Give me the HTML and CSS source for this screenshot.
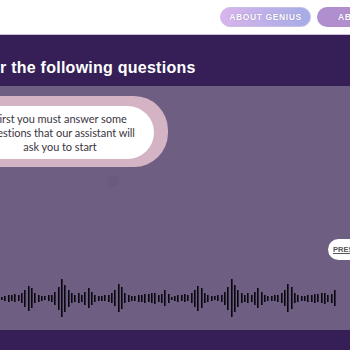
FILE: index.html
```html
<!DOCTYPE html>
<html lang="en">
<head>
<meta charset="UTF-8" />
<meta name="viewport" content="width=device-width, initial-scale=1" />
<title>Genius – Questions</title>
<link rel="stylesheet" href="styles.css">
</head>
<body>

<header class="topbar">
  <nav class="nav">
    <a class="nav-btn genius" href="#">About Genius</a>
    <a class="nav-btn other" href="#">About us</a>
  </nav>
</header>

<div class="title-band">
  <h1>r the following questions</h1>
</div>

<main class="stage">
  <div class="bubble">
    <p class="bubble-text">First you must answer some<br>questions that our assistant will<br>ask you to start</p>
  </div>
  <div class="dot"></div>

  <div class="press-row">
    <button class="press-btn">PRESS</button>
  </div>

  <svg class="wave" id="wave" width="350" height="42" viewBox="0 0 350 42"></svg>
</main>

<footer class="bottom-band"></footer>

<script src="script.js"></script>
</body>
</html>
```

FILE: styles.css
```css
body {
  margin: 0;
  width: 350px;
  overflow: hidden;
  background: #fff;
  font-family: 'Liberation Sans', Arial, sans-serif;
}

/* top white bar */
.topbar {
  height: 34px;
  background: #fff;
  border-bottom: 1px solid #cdbfd9;
  overflow: hidden;
}
.nav {
  display: flex;
  gap: 6px;
  padding: 7px 0 0 220px;
  white-space: nowrap;
}
.nav-btn {
  display: flex;
  align-items: center;
  justify-content: center;
  height: 20px;
  width: 91px;
  flex-shrink: 0;
  box-sizing: border-box;
  border-radius: 10px;
  color: #fff;
  font-size: 8.5px;
  font-weight: bold;
  letter-spacing: 0.6px;
  text-transform: uppercase;
  text-decoration: none;
  text-shadow: 0 0 1px rgba(90, 60, 130, 0.5);
}
.nav-btn.genius {
  background: linear-gradient(90deg, #d9b4ec, #a4ace6);
  border: 1px solid #c9bde6;
}
.nav-btn.other {
  background: #b18fcf;
}

/* heading band */
.title-band {
  height: 51px;
  background: #351f56;
  display: flex;
  align-items: center;
  box-sizing: border-box;
  padding-top: 14px;
}
.title-band h1 {
  margin: 0;
  color: #fff;
  font-size: 16px;
  font-weight: bold;
  letter-spacing: 0.25px;
}

/* main purple area */
.stage {
  height: 244px;
  background: #6e5f82;
  padding-top: 10px;
  box-sizing: border-box;
  overflow: hidden;
}
.bubble {
  width: 216px;
  margin-left: -48px;
  box-sizing: border-box;
  padding: 10px 14px 8px 14px;
  background: #d3b3c4;
  border-radius: 34px;
}
.bubble-text {
  margin: 0;
  background: #fff;
  border-radius: 28px;
  padding: 6px 0 5px;
  text-align: center;
  font-family: Lato, 'Open Sans', sans-serif;
  font-size: 11px;
  letter-spacing: -0.05px;
  line-height: 14px;
  color: #3b3541;
}
.dot {
  width: 12px;
  height: 12px;
  margin: 8px 0 0 107px;
  border-radius: 50%;
  background: #6a5b7e;
}

.press-row {
  display: flex;
  padding-left: 328px;
  margin-top: 52px;
  white-space: nowrap;
}
.press-btn {
  flex-shrink: 0;
  height: 21px;
  padding: 0 10px 0 5px;
  border: none;
  border-radius: 11px;
  background: #fff;
  color: #555;
  font-family: 'Liberation Sans', Arial, sans-serif;
  font-size: 7.5px;
  font-weight: bold;
  text-decoration: underline;
  text-align: left;
}

.wave {
  display: block;
  margin-top: 17px;
}

.bottom-band {
  height: 20px;
  background: #351f56;
}
```

FILE: script.js
```js
// one period of the voice wave, bar heights in px
const period = [3,5,7,6,8,6,10,17,25,20,10,7,5,4,6,7,13,23,38,27,17,10,7,10,7,13,
                20,13,7,5,5,6,7,10,16,28,22,10,7,5,5,7,7,9,8,10,11,7,9,16,9];

const wave = document.getElementById('wave');
const ns = 'http://www.w3.org/2000/svg';
const step = 3.33;

for (let i = 0; i < 101; i++) {
  const h = period[i % period.length];
  const bar = document.createElementNS(ns, 'rect');
  bar.setAttribute('x', Math.round(1 + i * step));
  bar.setAttribute('y', Math.round(21 - h / 2));
  bar.setAttribute('width', 1.6);
  bar.setAttribute('height', h);
  bar.setAttribute('fill', '#0b0710');
  wave.appendChild(bar);
}
```
